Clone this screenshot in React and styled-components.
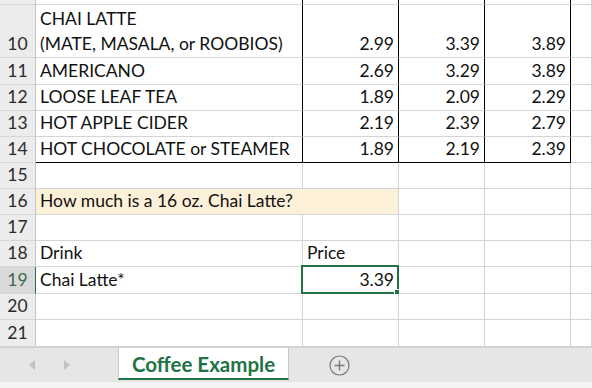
import React from 'react'
import styled, { createGlobalStyle } from 'styled-components'

const Global = createGlobalStyle`
  html, body { margin: 0; padding: 0; background: #fff; }
  body { width: 592px; height: 388px; overflow: hidden; }
`

const GRID = '#d4d4d4'
const GREEN = '#217346'

const rows = [
  { n: 9, h: 26, a: 'ICED LATTE', nums: ['3.59', '3.79', '4.29'], table: true },
  { n: 10, h: 53, a: ['CHAI LATTE', '(MATE, MASALA, or ROOBIOS)'], nums: ['2.99', '3.39', '3.89'], table: true },
  { n: 11, h: 27, a: 'AMERICANO', nums: ['2.69', '3.29', '3.89'], table: true },
  { n: 12, h: 26, a: 'LOOSE LEAF TEA', nums: ['1.89', '2.09', '2.29'], table: true },
  { n: 13, h: 26, a: 'HOT APPLE CIDER', nums: ['2.19', '2.39', '2.79'], table: true },
  { n: 14, h: 26, a: 'HOT CHOCOLATE or STEAMER', nums: ['1.89', '2.19', '2.39'], table: true, last: true },
  { n: 15, h: 26 },
  { n: 16, h: 26, a: 'How much is a 16 oz. Chai Latte?', fill: true },
  { n: 17, h: 26 },
  { n: 18, h: 26, a: 'Drink', b: 'Price' },
  { n: 19, h: 27, a: 'Chai Latte*', bnum: '3.39', selected: true },
  { n: 20, h: 26 },
  { n: 21, h: 27 },
]

const Window = styled.div`
  width: 592px;
  height: 388px;
  display: flex;
  flex-direction: column;
  font-family: Lato, "Open Sans", sans-serif;
  color: #111;
`

const Viewport = styled.div`
  height: 347px;
  overflow: hidden;
`

// first row is only partly on screen, as in the scrolled sheet
const Sheet = styled.div`
  margin-top: -21px;
  display: grid;
  grid-template-columns: 36px 267px 96px 86px 86px 1fr;
  grid-template-rows: ${p => p.$rows};
`

const RowHead = styled.div`
  box-sizing: border-box;
  background: ${p => (p.$active ? '#d9d9d9' : '#ececec')};
  border-bottom: 1px solid #d6d6d6;
  border-right: 1px solid ${p => (p.$active ? GREEN : '#c4c4c4')};
  color: ${p => (p.$active ? '#3d6b4b' : '#2b2b2b')};
  font-size: 17.5px;
  line-height: 22px;
  display: flex;
  align-items: flex-end;
  justify-content: center;
  padding-bottom: 2px;
`

const Cell = styled.div`
  box-sizing: border-box;
  position: relative;
  border-right: 1px solid ${p => p.$rightColor || GRID};
  border-bottom: 1px solid ${p => (p.$bottomBlack ? '#000' : GRID)};
  background: ${p => (p.$fill ? '#fdf0d8' : '#fff')};
  font-size: 17.5px;
  line-height: 25px;
  padding: 0 4px 1px 4px;
  display: flex;
  flex-direction: column;
  justify-content: flex-end;
  align-items: ${p => (p.$num ? 'flex-end' : 'flex-start')};
  white-space: nowrap;
  z-index: ${p => (p.$over ? 1 : 'auto')};
`

const Selection = styled.div`
  position: absolute;
  left: -2px;
  top: -2px;
  right: -1px;
  bottom: -1px;
  border: 2px solid ${GREEN};
  pointer-events: none;
`

const Handle = styled.div`
  position: absolute;
  right: -4px;
  bottom: -4px;
  width: 5px;
  height: 5px;
  background: ${GREEN};
  border: 1px solid #fff;
`

const TabBar = styled.div`
  flex: 1;
  display: flex;
  flex-direction: column;
  background: #f3f3f3;
`

const TabRow = styled.div`
  height: 35px;
  box-sizing: border-box;
  background: #e6e6e6;
  border-top: 1px solid #cfcfcf;
  display: flex;
  align-items: flex-start;
`

const Nav = styled.div`
  width: 118px;
  height: 34px;
  display: flex;
  align-items: center;
  padding-left: 29px;
  box-sizing: border-box;
  gap: 29px;
`

const Arrow = styled.span`
  width: 0;
  height: 0;
  border-top: 5px solid transparent;
  border-bottom: 5px solid transparent;
  ${p => (p.$dir === 'left' ? 'border-right: 6px solid #c2c2c2;' : 'border-left: 6px solid #c2c2c2;')}
`

const Tab = styled.div`
  width: 171px;
  height: 32px;
  box-sizing: border-box;
  background: #fff;
  border-left: 1px solid #c8c8c8;
  border-right: 1px solid #c8c8c8;
  border-bottom: 2px solid ${GREEN};
  color: ${GREEN};
  font-weight: 700;
  font-size: 20.5px;
  display: flex;
  align-items: center;
  justify-content: center;
  padding-top: 1px;
`

const AddSheet = styled.div`
  margin-left: 40px;
  margin-top: 7px;
  width: 21px;
  height: 21px;
  display: flex;
`

function SheetRow({ r }) {
  const tableRight = r.table ? '#000' : undefined
  const bottomBlack = r.last
  return (
    <>
      <RowHead $active={r.selected}>{r.n}</RowHead>
      <Cell
        $rightColor={r.fill ? '#fdf0d8' : tableRight}
        $bottomBlack={bottomBlack}
        $fill={r.fill}
        $over={r.fill}
      >
        {Array.isArray(r.a) ? r.a.map(t => <div key={t}>{t}</div>) : r.a}
      </Cell>
      <Cell $rightColor={tableRight} $bottomBlack={bottomBlack} $fill={r.fill} $num={!!(r.nums || r.bnum)}>
        {r.nums ? r.nums[0] : r.bnum || r.b}
        {r.selected && (
          <Selection>
            <Handle />
          </Selection>
        )}
      </Cell>
      <Cell $rightColor={tableRight} $bottomBlack={bottomBlack} $num>
        {r.nums && r.nums[1]}
      </Cell>
      <Cell $rightColor={tableRight} $bottomBlack={bottomBlack} $num>
        {r.nums && r.nums[2]}
      </Cell>
      <Cell />
    </>
  )
}

export default function App() {
  return (
    <Window>
      <Global />
      <Viewport>
        <Sheet $rows={rows.map(r => r.h + 'px').join(' ')}>
          {rows.map(r => (
            <SheetRow key={r.n} r={r} />
          ))}
        </Sheet>
      </Viewport>
      <TabBar>
        <TabRow>
          <Nav>
            <Arrow $dir="left" />
            <Arrow $dir="right" />
          </Nav>
          <Tab>Coffee Example</Tab>
          <AddSheet>
            <svg width="21" height="21" viewBox="0 0 21 21">
              <circle cx="10.5" cy="10.5" r="9.5" fill="none" stroke="#7a7a7a" strokeWidth="1.2" />
              <path d="M10.5 5.5v10M5.5 10.5h10" stroke="#7a7a7a" strokeWidth="1.4" />
            </svg>
          </AddSheet>
        </TabRow>
      </TabBar>
    </Window>
  )
}
